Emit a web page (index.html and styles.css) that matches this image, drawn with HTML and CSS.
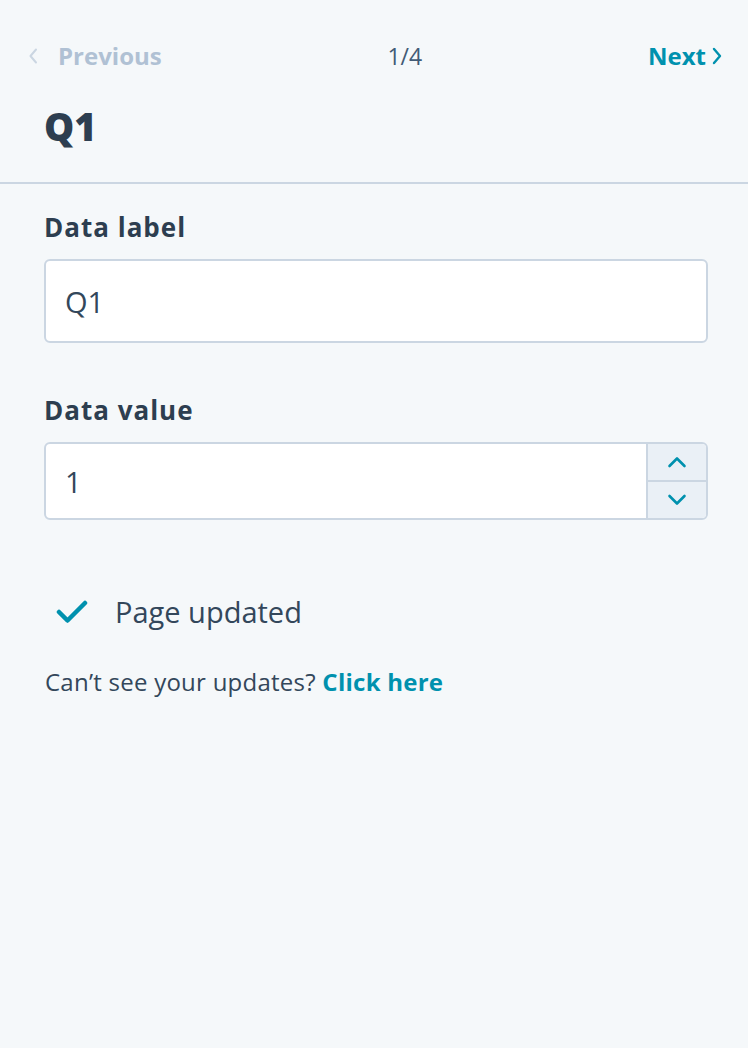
FILE: index.html
```html
<!DOCTYPE html>
<html lang="en">

<head>
  <meta charset="UTF-8">
  <meta name="viewport" content="width=device-width, initial-scale=1.0">
  <title>Edit data point</title>
  <link rel="stylesheet" href="styles.css">
</head>

<body>
  <header class="panel-header">
    <nav class="pager">
      <a class="pager-link disabled" href="#">
        <svg class="chevron" width="10" height="16" viewBox="0 0 10 16">
          <path d="M8 1.5 L2.5 8 L8 14.5" />
        </svg>
        <span>Previous</span>
      </a>
      <span class="pager-count">1/4</span>
      <a class="pager-link next" href="#">
        <span>Next</span>
        <svg class="chevron" width="10" height="18" viewBox="0 0 10 18">
          <path d="M2 2 L8 9 L2 16" />
        </svg>
      </a>
    </nav>
    <h1 class="panel-title">Q1</h1>
  </header>

  <main class="panel-body">
    <div class="field">
      <label for="data-label">Data label</label>
      <input id="data-label" class="text-input" type="text" value="Q1">
    </div>

    <div class="field">
      <label for="data-value">Data value</label>
      <div class="number-input">
        <input id="data-value" type="text" value="1">
        <div class="stepper">
          <button type="button" aria-label="Increase">
            <svg width="20" height="12" viewBox="0 0 20 12"><path d="M2.5 10 L10 2.5 L17.5 10" /></svg>
          </button>
          <button type="button" aria-label="Decrease">
            <svg width="20" height="12" viewBox="0 0 20 12"><path d="M2.5 2 L10 9.5 L17.5 2" /></svg>
          </button>
        </div>
      </div>
    </div>

    <div class="status">
      <svg class="check" width="32" height="24" viewBox="0 0 32 24">
        <path d="M3 12 L11.5 20.5 L29 3" />
      </svg>
      <span>Page updated</span>
    </div>

    <p class="hint">Can’t see your updates? <a href="#">Click here</a></p>
  </main>
</body>

</html>
```

FILE: styles.css
```css
:root {
  --bg-color: #f5f8fa;
  --text-color: #33475b;
  --heading-color: #2d3e50;
  --muted-color: #b0c1d4;
  --border-color: #cbd6e2;
  --stepper-bg: #eaf0f6;
  --accent: #0091ae;
}

body {
  background-color: var(--bg-color);
  color: var(--text-color);
  font-family: "Open Sans", "Noto Sans", sans-serif;
  margin: 0;
}

a {
  text-decoration: none;
}

.panel-header {
  border-bottom: 2px solid var(--border-color);
  padding: 40px 26px 33px 28px;
}

.pager {
  align-items: center;
  display: flex;
  justify-content: space-between;
}

.pager-link {
  align-items: center;
  color: var(--accent);
  display: flex;
  font-size: 24px;
  font-weight: 700;
  line-height: 32px;
}

.pager-link .chevron {
  fill: none;
  stroke: currentColor;
  stroke-linecap: round;
  stroke-linejoin: round;
  stroke-width: 2.4;
}

.pager-link.disabled {
  color: var(--muted-color);
  gap: 20px;
}

.pager-link.disabled .chevron {
  stroke: var(--border-color);
  stroke-width: 2;
}

.pager-link.next {
  gap: 6px;
}

.pager-count {
  color: #425b76;
  font-size: 23px;
  line-height: 32px;
}

.panel-title {
  color: var(--heading-color);
  font-size: 38px;
  font-weight: 800;
  line-height: 46px;
  margin: 31px 0 0 16px;
}

.panel-body {
  padding: 27px 40px 0 44px;
}

.field {
  display: flex;
  flex-direction: column;
  gap: 16px;
  margin-bottom: 51px;
}

.field label {
  color: var(--heading-color);
  font-size: 26px;
  font-weight: 700;
  letter-spacing: 1px;
  line-height: 32px;
}

.text-input,
.number-input {
  background-color: #fff;
  border: 2px solid var(--border-color);
  border-radius: 6px;
  box-sizing: border-box;
  width: 100%;
}

.text-input,
.number-input input {
  color: var(--text-color);
  font-family: inherit;
  font-size: 29px;
  padding: 0 19px;
}

.text-input {
  height: 84px;
}

.number-input {
  display: flex;
  height: 78px;
  overflow: hidden;
}

.number-input input {
  background: transparent;
  border: 0;
  flex: 1;
  min-width: 0;
  outline: none;
}

.stepper {
  border-left: 2px solid var(--border-color);
  display: flex;
  flex-direction: column;
  width: 58px;
}

.stepper button {
  align-items: center;
  background-color: var(--stepper-bg);
  border: 0;
  display: flex;
  flex: 1;
  justify-content: center;
  padding: 0;
}

.stepper button + button {
  border-top: 2px solid var(--border-color);
}

.stepper svg {
  fill: none;
  stroke: var(--accent);
  stroke-linecap: round;
  stroke-linejoin: round;
  stroke-width: 2.6;
}

.status {
  align-items: center;
  display: flex;
  font-size: 29px;
  gap: 27px;
  line-height: 36px;
  margin-top: 74px;
  padding-left: 12px;
}

.check {
  fill: none;
  stroke: var(--accent);
  stroke-linecap: round;
  stroke-linejoin: round;
  stroke-width: 4.5;
}

.hint {
  font-size: 24px;
  letter-spacing: 0.25px;
  line-height: 32px;
  margin: 36px 0 0 1px;
}

.hint a {
  color: var(--accent);
  font-weight: 700;
}
```
